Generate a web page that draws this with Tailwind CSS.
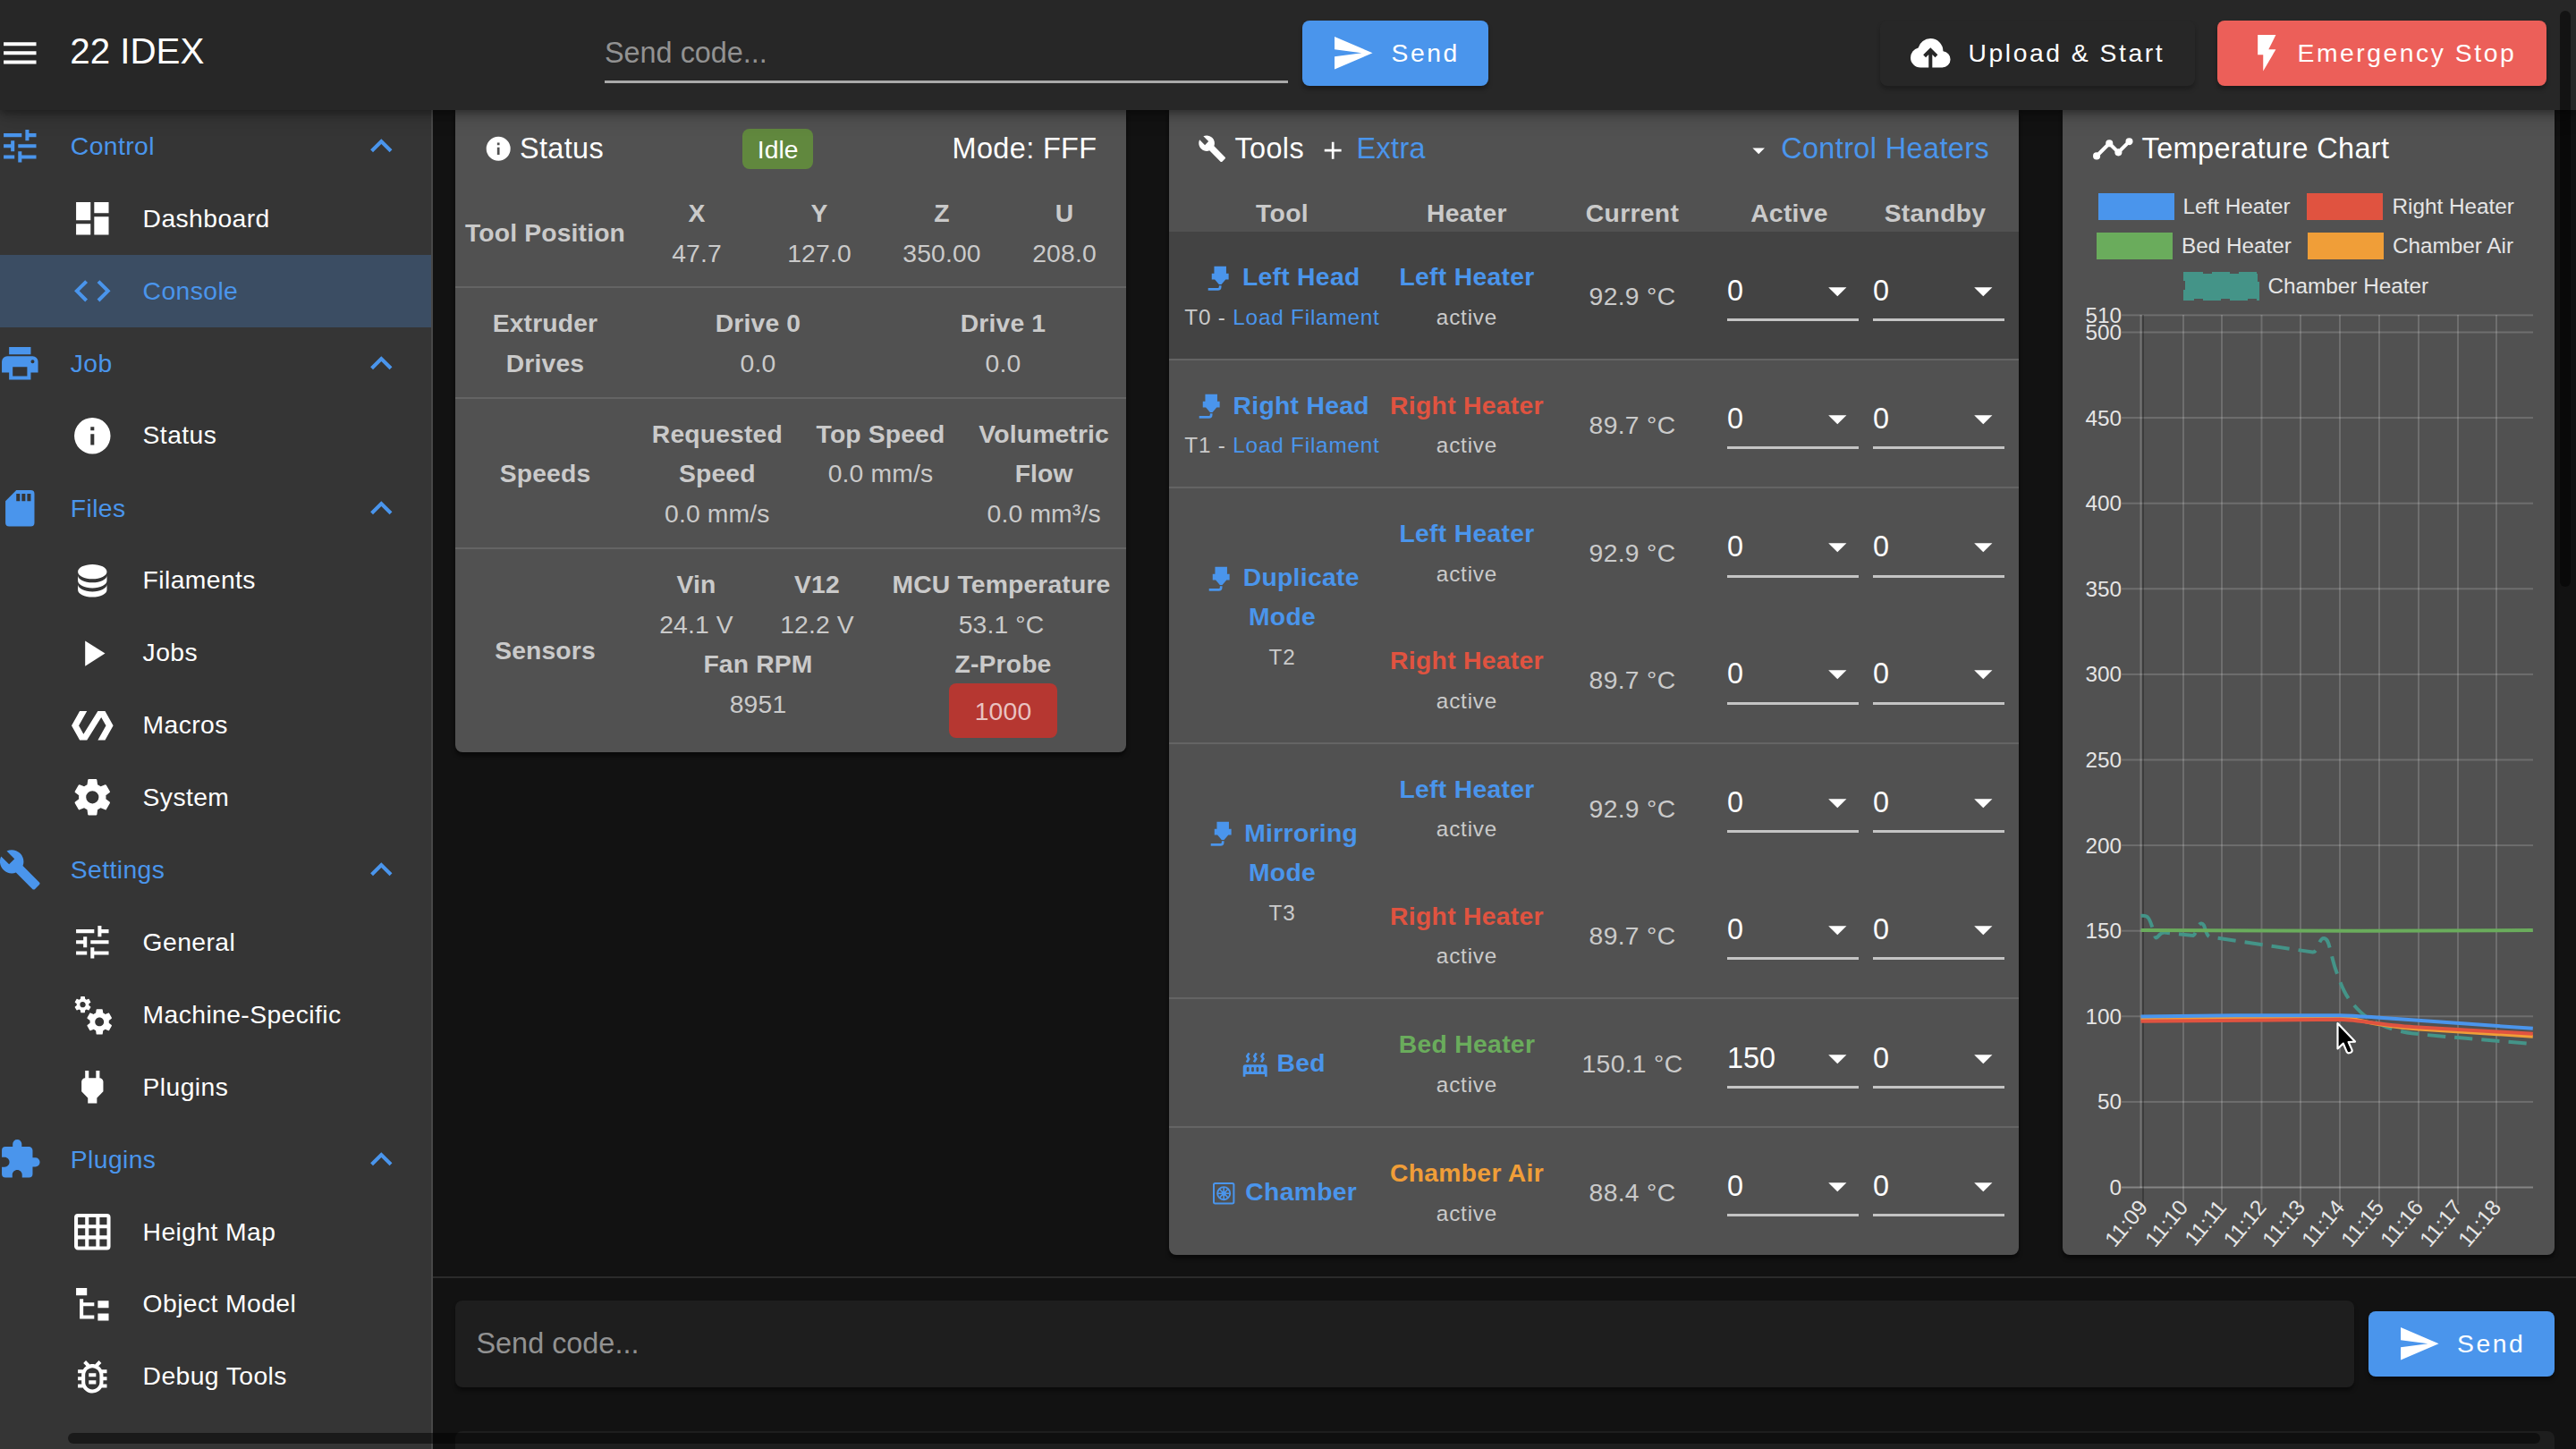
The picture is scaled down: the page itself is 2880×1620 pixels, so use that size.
<!DOCTYPE html>
<html lang="en">
<head>
<meta charset="utf-8">
<title>22 IDEX</title>
<script src="https://cdn.jsdelivr.net/npm/@tailwindcss/browser@4"></script>
</head>
<body class="w-[2880px] h-[1620px] overflow-hidden bg-[#121212] text-white font-['Liberation_Sans',Arial,sans-serif] text-[28.3px] tracking-[0.3px]">
<svg class="hidden">
  <symbol id="i-menu" viewBox="0 0 24 24"><path d="M3,6H21V8H3V6M3,11H21V13H3V11M3,16H21V18H3V16Z"/></symbol>
  <symbol id="i-tune" viewBox="0 0 24 24"><path d="M3 17V19H9V17H3M3 5V7H13V5H3M13 21V19H21V17H13V15H11V21H13M7 9V11H3V13H7V15H9V9H7M21 13V11H11V13H21M15 9H17V7H21V5H17V3H15V9Z"/></symbol>
  <symbol id="i-dash" viewBox="0 0 24 24"><path d="M13,3V9H21V3M13,21H21V11H13M3,21H11V15H3M3,13H11V3H3V13Z"/></symbol>
  <symbol id="i-code" viewBox="0 0 24 24"><path d="M14.6,16.6L19.2,12L14.6,7.4L16,6L22,12L16,18L14.6,16.6M9.4,16.6L4.8,12L9.4,7.4L8,6L2,12L8,18L9.4,16.6Z"/></symbol>
  <symbol id="i-printer" viewBox="0 0 24 24"><path d="M18,3H6V7H18M19,12A1,1 0 0,1 18,11A1,1 0 0,1 19,10A1,1 0 0,1 20,11A1,1 0 0,1 19,12M16,19H8V14H16M19,8H5A3,3 0 0,0 2,11V17H6V21H18V17H22V11A3,3 0 0,0 19,8Z"/></symbol>
  <symbol id="i-info" viewBox="0 0 24 24"><path d="M13,9H11V7H13M13,17H11V11H13M12,2A10,10 0 0,0 2,12A10,10 0 0,0 12,22A10,10 0 0,0 22,12A10,10 0 0,0 12,2Z"/></symbol>
  <symbol id="i-sd" viewBox="0 0 24 24"><path d="M18,8H16V4H18M15,8H13V4H15M12,8H10V4H12M18,2H10L4,8V20A2,2 0 0,0 6,22H18A2,2 0 0,0 20,20V4A2,2 0 0,0 18,2Z"/></symbol>
  <symbol id="i-db" viewBox="0 0 24 24"><path d="M12,3C7.58,3 4,4.79 4,7C4,9.21 7.58,11 12,11C16.42,11 20,9.21 20,7C20,4.79 16.42,3 12,3M4,9V12C4,14.21 7.58,16 12,16C16.42,16 20,14.21 20,12V9C20,11.21 16.42,13 12,13C7.58,13 4,11.21 4,9M4,14V17C4,19.21 7.58,21 12,21C16.42,21 20,19.21 20,17V14C20,16.21 16.42,18 12,18C7.58,18 4,16.21 4,14Z"/></symbol>
  <symbol id="i-play" viewBox="0 0 24 24"><path d="M8,5.14V19.14L19,12.14L8,5.14Z"/></symbol>
  <symbol id="i-polymer" viewBox="0 0 24 24"><path d="M19,4H15L7.1,16.63L4.5,12L9,4H5L0.5,12L5,20H9L16.89,7.37L19.5,12L15,20H19L23.5,12L19,4Z"/></symbol>
  <symbol id="i-cog" viewBox="0 0 24 24"><path d="M12,15.5A3.5,3.5 0 0,1 8.5,12A3.5,3.5 0 0,1 12,8.5A3.5,3.5 0 0,1 15.5,12A3.5,3.5 0 0,1 12,15.5M19.43,12.97C19.47,12.65 19.5,12.33 19.5,12C19.5,11.67 19.47,11.34 19.43,11L21.54,9.37C21.73,9.22 21.78,8.95 21.66,8.73L19.66,5.27C19.54,5.05 19.27,4.96 19.05,5.05L16.56,6.05C16.04,5.66 15.5,5.32 14.87,5.07L14.5,2.42C14.46,2.18 14.25,2 14,2H10C9.75,2 9.54,2.18 9.5,2.42L9.13,5.07C8.5,5.32 7.96,5.66 7.44,6.05L4.95,5.05C4.73,4.96 4.46,5.05 4.34,5.27L2.34,8.73C2.21,8.95 2.27,9.22 2.46,9.37L4.57,11C4.53,11.34 4.5,11.67 4.5,12C4.5,12.33 4.53,12.65 4.57,12.97L2.46,14.63C2.27,14.78 2.21,15.05 2.34,15.27L4.34,18.73C4.46,18.95 4.73,19.03 4.95,18.95L7.44,17.94C7.96,18.34 8.5,18.68 9.13,18.93L9.5,21.58C9.54,21.82 9.75,22 10,22H14C14.25,22 14.46,21.82 14.5,21.58L14.87,18.93C15.5,18.67 16.04,18.34 16.56,17.94L19.05,18.95C19.27,19.03 19.54,18.95 19.66,18.73L21.66,15.27C21.78,15.05 21.73,14.78 21.54,14.63L19.43,12.97Z"/></symbol>
  <symbol id="i-wrench" viewBox="0 0 24 24"><path d="M22.7,19L13.6,9.9C14.5,7.6 14,4.9 12.1,3C10.1,1 7.1,0.6 4.7,1.7L9,6L6,9L1.6,4.7C0.4,7.1 0.9,10.1 2.9,12.1C4.8,14 7.5,14.5 9.8,13.6L18.9,22.7C19.3,23.1 19.9,23.1 20.3,22.7L22.6,20.4C23.1,20 23.1,19.3 22.7,19Z"/></symbol>
  <symbol id="i-cogs" viewBox="0 0 24 24"><path d="M15.9,18.45C17.25,18.45 18.35,17.35 18.35,16C18.35,14.65 17.25,13.55 15.9,13.55C14.54,13.55 13.45,14.65 13.45,16C13.45,17.35 14.54,18.45 15.9,18.45M21.1,16.68L22.58,17.84C22.71,17.95 22.75,18.13 22.66,18.29L21.26,20.71C21.17,20.86 21,20.92 20.83,20.86L19.09,20.16C18.73,20.44 18.33,20.67 17.91,20.85L17.64,22.7C17.62,22.87 17.47,23 17.3,23H14.5C14.32,23 14.18,22.87 14.15,22.7L13.89,20.85C13.46,20.67 13.07,20.44 12.71,20.16L10.96,20.86C10.81,20.92 10.62,20.86 10.54,20.71L9.14,18.29C9.05,18.13 9.09,17.95 9.22,17.84L10.7,16.68L10.65,16L10.7,15.31L9.22,14.16C9.09,14.05 9.05,13.86 9.14,13.71L10.54,11.29C10.62,11.13 10.81,11.07 10.96,11.13L12.71,11.84C13.07,11.56 13.46,11.32 13.89,11.15L14.15,9.29C14.18,9.13 14.32,9 14.5,9H17.3C17.47,9 17.62,9.13 17.64,9.29L17.91,11.15C18.33,11.32 18.73,11.56 19.09,11.84L20.83,11.13C21,11.07 21.17,11.13 21.26,11.29L22.66,13.71C22.75,13.86 22.71,14.05 22.58,14.16L21.1,15.31L21.15,16L21.1,16.68M6.69,8.07C7.56,8.07 8.26,7.37 8.26,6.5C8.26,5.63 7.56,4.92 6.69,4.92A1.58,1.58 0 0,0 5.11,6.5C5.11,7.37 5.82,8.07 6.69,8.07M10.03,6.94L11,7.68C11.07,7.75 11.09,7.87 11.03,7.97L10.13,9.53C10.08,9.63 9.96,9.67 9.86,9.63L8.74,9.18L8,9.62L7.81,10.81C7.79,10.92 7.7,11 7.59,11H5.79C5.67,11 5.58,10.92 5.56,10.81L5.4,9.62L4.64,9.18L3.52,9.63C3.41,9.67 3.3,9.63 3.24,9.53L2.34,7.97C2.28,7.87 2.31,7.75 2.39,7.68L3.34,6.94L3.31,6.5L3.34,6.06L2.39,5.32C2.31,5.25 2.28,5.13 2.34,5.03L3.24,3.47C3.3,3.37 3.41,3.33 3.52,3.37L4.63,3.82L5.4,3.38L5.56,2.19C5.58,2.08 5.67,2 5.79,2H7.59C7.7,2 7.79,2.08 7.81,2.19L8,3.38L8.74,3.82L9.86,3.37C9.96,3.33 10.08,3.37 10.13,3.47L11.03,5.03C11.09,5.13 11.07,5.25 11,5.32L10.03,6.06L10.06,6.5L10.03,6.94Z"/></symbol>
  <symbol id="i-plug" viewBox="0 0 24 24"><path d="M16,7V3H14V7H10V3H8V7H8C7,7 6,8 6,9V14.5L9.5,18V21H14.5V18L18,14.5V9C18,8 17,7 16,7Z"/></symbol>
  <symbol id="i-puzzle" viewBox="0 0 24 24"><path d="M20.5,11H19V7C19,5.89 18.1,5 17,5H13V3.5A2.5,2.5 0 0,0 10.5,1A2.5,2.5 0 0,0 8,3.5V5H4A2,2 0 0,0 2,7V10.8H3.5C5,10.8 6.2,12 6.2,13.5C6.2,15 5,16.2 3.5,16.2H2V20A2,2 0 0,0 4,22H7.8V20.5C7.8,19 9,17.8 10.5,17.8C12,17.8 13.2,19 13.2,20.5V22H17A2,2 0 0,0 19,20V16H20.5A2.5,2.5 0 0,0 23,13.5A2.5,2.5 0 0,0 20.5,11Z"/></symbol>
  <symbol id="i-grid" viewBox="0 0 24 24"><path d="M10,4V8H14V4H10M16,4V8H20V4H16M16,10V14H20V10H16M16,16V20H20V16H16M14,20V16H10V20H14M8,20V16H4V20H8M8,14V10H4V14H8M8,8V4H4V8H8M10,14H14V10H10V14M4,2H20A2,2 0 0,1 22,4V20A2,2 0 0,1 20,22H4C2.92,22 2,21.1 2,20V4A2,2 0 0,1 4,2Z"/></symbol>
  <symbol id="i-tree" viewBox="0 0 24 24"><path d="M3,3H9V7H3V3M15,10H21V14H15V10M15,17H21V21H15V17M13,13H7V18H13V20H7L5,20V9H7V11H13V13Z"/></symbol>
  <symbol id="i-bug" viewBox="0 0 24 24"><path d="M20 8H17.19C16.74 7.2 16.12 6.5 15.37 6L17 4.41L15.59 3L13.42 5.17C12.96 5.06 12.5 5 12 5S11.05 5.06 10.59 5.17L8.41 3L7 4.41L8.62 6C7.87 6.5 7.26 7.21 6.81 8H4V10H6.09C6.03 10.33 6 10.66 6 11V12H4V14H6V15C6 15.34 6.03 15.67 6.09 16H4V18H6.81C8.47 20.87 12.14 21.84 15 20.18C15.91 19.66 16.67 18.9 17.19 18H20V16H17.91C17.97 15.67 18 15.34 18 15V14H20V12H18V11C18 10.66 17.97 10.33 17.91 10H20V8M16 15C16 17.21 14.21 19 12 19S8 17.21 8 15V11C8 8.79 9.79 7 12 7S16 8.79 16 11V15M14 10V12H10V10H14M10 14H14V16H10V14Z"/></symbol>
  <symbol id="i-up" viewBox="0 0 24 24"><path d="M7.41,15.41L12,10.83L16.59,15.41L18,14L12,8L6,14L7.41,15.41Z"/></symbol>
  <symbol id="i-down" viewBox="0 0 24 24"><path d="M7,10L12,15L17,10H7Z"/></symbol>
  <symbol id="i-plus" viewBox="0 0 24 24"><path d="M19,13H13V19H11V13H5V11H11V5H13V11H19V13Z"/></symbol>
  <symbol id="i-send" viewBox="0 0 24 24"><path d="M2,21L23,12L2,3V10L17,12L2,14V21Z"/></symbol>
  <symbol id="i-cloud" viewBox="0 0 24 24"><path d="M11 20H6.5Q4.22 20 2.61 18.43 1 16.85 1 14.58 1 12.63 2.17 11.1 3.35 9.57 5.25 9.15 5.88 6.85 7.75 5.43 9.63 4 12 4 14.93 4 16.96 6.04 19 8.07 19 11 20.73 11.2 21.86 12.5 23 13.78 23 15.5 23 17.38 21.69 18.69 20.38 20 18.5 20H13V12.85L14.6 14.4L16 13L12 9L8 13L9.4 14.4L11 12.85Z"/></symbol>
  <symbol id="i-flash" viewBox="0 0 24 24"><path d="M7,2V13H10V22L17,10H13L17,2H7Z"/></symbol>
  <symbol id="i-nozzle" viewBox="0 0 24 24"><path d="M7,2H17V8H19V13H16.5L13,17H11L7.5,13H5V8H7V2M10,22H2V20H10A1,1 0 0,0 11,19V18H13V19A3,3 0 0,1 10,22Z"/></symbol>
  <symbol id="i-bed" viewBox="0 0 24 24"><path d="M7.95,3L6.53,5.19L7.95,7.4H7.94L5.95,10.5L4.22,9.6L5.64,7.39L4.22,5.19L6.22,2.09L7.95,3M13.95,2.89L12.53,5.1L13.95,7.3L13.94,7.31L11.95,10.4L10.22,9.5L11.64,7.3L10.22,5.1L12.22,2L13.95,2.89M20,2.89L18.56,5.1L20,7.3V7.31L18,10.4L16.25,9.5L17.67,7.3L16.25,5.1L18.25,2L20,2.89M2,22V14A2,2 0 0,1 4,12H20A2,2 0 0,1 22,14V22H20V20H4V22H2M6,14A1,1 0 0,0 5,15V17A1,1 0 0,0 6,18A1,1 0 0,0 7,17V15A1,1 0 0,0 6,14M10,14A1,1 0 0,0 9,15V17A1,1 0 0,0 10,18A1,1 0 0,0 11,17V15A1,1 0 0,0 10,14M14,14A1,1 0 0,0 13,15V17A1,1 0 0,0 14,18A1,1 0 0,0 15,17V15A1,1 0 0,0 14,14M18,14A1,1 0 0,0 17,15V17A1,1 0 0,0 18,18A1,1 0 0,0 19,17V15A1,1 0 0,0 18,14Z"/></symbol>
  <symbol id="i-chamber" viewBox="0 0 24 24"><g fill="none" stroke="currentColor"><rect x="3.7" y="3.7" width="16.6" height="16.6" rx="1.2" stroke-width="1.5"/><circle cx="12" cy="12" r="5.2" stroke-width="1.4"/><path d="M12 7v10M7 12h10M8.5 8.5l7 7M15.5 8.5l-7 7" stroke-width="1.2"/></g><circle cx="12" cy="12" r="1.9"/></symbol>
  <symbol id="i-chart" viewBox="0 0 24 24"><path d="M23,8C23,9.11 22.11,10 21,10C20.82,10 20.64,9.97 20.5,9.93L16.93,13.5C16.97,13.65 17,13.82 17,14A2,2 0 0,1 15,16A2,2 0 0,1 13,14C13,13.82 13.03,13.64 13.07,13.5L10.5,10.93C10.36,10.97 10.18,11 10,11C9.82,11 9.64,10.97 9.5,10.93L4.93,15.5C4.97,15.64 5,15.82 5,16A2,2 0 0,1 3,18A2,2 0 0,1 1,16A2,2 0 0,1 3,14C3.18,14 3.36,14.03 3.5,14.07L8.07,9.5C8.03,9.36 8,9.18 8,9A2,2 0 0,1 10,7A2,2 0 0,1 12,9C12,9.18 11.97,9.36 11.93,9.5L14.5,12.07C14.64,12.03 14.82,12 15,12C15.18,12 15.36,12.03 15.5,12.07L19.07,8.5C19.03,8.36 19,8.18 19,8A2,2 0 0,1 21,6A2,2 0 0,1 23,8Z"/></symbol>
</svg>

<div class="flex flex-col w-[2880px] h-[1620px]">
  <!-- App bar -->
  <header class="relative z-10 flex items-center h-[123px] pb-[5px] shrink-0 bg-[#272727] shadow-[0_4px_8px_rgba(0,0,0,.3),0_8px_20px_rgba(0,0,0,.18)]">
    <svg class="size-[48.6px] -ml-[2.3px] shrink-0 fill-current"><use href="#i-menu"/></svg>
    <h1 class="w-[629.7px] shrink-0 pl-[32px] pb-[2px] text-[40.3px] leading-[50px] tracking-normal">22 IDEX</h1>
    <div class="flex items-center w-[764px] shrink-0 h-[64px] border-b-[3px] border-[#a9a9a9] text-[32.4px] tracking-normal text-[#929292] self-end mb-[25px]">Send code...</div>
    <button class="flex items-center w-[208px] h-[73px] ml-4 pl-[32px] rounded-lg bg-[#4a95ec] tracking-[2.53px] shadow-[0_4px_5px_rgba(0,0,0,.3)]">
      <svg class="size-[48.6px] fill-current"><use href="#i-send"/></svg><span class="ml-[19px]">Send</span></button>
    <button class="flex items-center w-[352px] h-[73px] ml-[438px] pl-[32px] rounded-lg bg-[#272727] tracking-[2.53px] whitespace-nowrap shadow-[0_4px_5px_rgba(0,0,0,.25)]">
      <svg class="size-[48.6px] shrink-0 fill-current"><use href="#i-cloud"/></svg><span class="ml-[18px]">Upload &amp; Start</span></button>
    <button class="flex items-center w-[368px] h-[73px] ml-[25px] pl-[31px] rounded-lg bg-[#ec5f59] tracking-[2.53px] whitespace-nowrap shadow-[0_4px_5px_rgba(0,0,0,.3)]">
      <svg class="size-[48.6px] shrink-0 fill-current"><use href="#i-flash"/></svg><span class="ml-[10px]">Emergency Stop</span></button>
  </header>

  <div class="flex flex-1 min-h-0">
    <nav id="nav" class="w-[484px] shrink-0 bg-[#353535] border-r-2 border-[#484848] tracking-[0.4px]"></nav>

    <main class="flex-1 flex flex-col min-w-0">
      <div class="flex items-start h-[1280px] pl-[24.5px] gap-[48.5px] shrink-0">

        <!-- Status card -->
        <section class="w-[750px] h-[717.5px] rounded-b-lg bg-[#515151] text-[#cacaca] leading-[44.6px] tracking-[0.15px] text-center shadow-[0_4px_4px_rgba(0,0,0,.5)]">
          <div class="grid grid-cols-3 items-center h-[78px] pt-[9px] pl-[32px] pr-[32px] text-white text-[32.4px] tracking-[0.4px]">
            <div class="flex items-center"><svg class="size-[32.4px] fill-current"><use href="#i-info"/></svg><span class="ml-[8px]">Status</span></div>
            <div class="flex"><span class="w-[79px] h-[45px] ml-[61px] rounded-lg bg-[#61883e] text-[28.3px] leading-[47px] tracking-normal">Idle</span></div>
            <div class="text-right whitespace-nowrap">Mode: FFF</div>
          </div>
          <div class="grid grid-cols-[202px_548px] items-center h-[121px] border-b-2 border-[#646464]">
            <b class="whitespace-nowrap">Tool Position</b>
            <div class="grid grid-cols-4">
              <div><b>X</b><div>47.7</div></div><div><b>Y</b><div>127.0</div></div><div><b>Z</b><div>350.00</div></div><div><b>U</b><div>208.0</div></div>
            </div>
          </div>
          <div class="grid grid-cols-[202px_548px] items-center h-[124px] pt-[2px] border-b-2 border-[#646464]">
            <b class="px-[30px]">Extruder Drives</b>
            <div class="grid grid-cols-2"><div><b>Drive 0</b><div>0.0</div></div><div><b>Drive 1</b><div>0.0</div></div></div>
          </div>
          <div class="grid grid-cols-[202px_548px] items-center h-[168px] pt-[1px] border-b-2 border-[#646464]">
            <b>Speeds</b>
            <div class="grid grid-cols-3">
              <div><b>Requested<br>Speed</b><div>0.0 mm/s</div></div><div><b class="whitespace-nowrap">Top Speed</b><div>0.0 mm/s</div></div><div><b>Volumetric<br>Flow</b><div>0.0 mm³/s</div></div>
            </div>
          </div>
          <div class="grid grid-cols-[202px_548px] items-center h-[226px] pt-[1px]">
            <b>Sensors</b>
            <div class="mt-[1px]">
              <div class="grid grid-cols-[136px_134px_278px]">
                <div><b>Vin</b><div>24.1 V</div></div><div><b>V12</b><div>12.2 V</div></div><div><b class="whitespace-nowrap">MCU Temperature</b><div>53.1 °C</div></div>
              </div>
              <div class="grid grid-cols-2">
                <div><b>Fan RPM</b><div>8951</div></div>
                <div><b>Z-Probe</b><div class="w-[121.5px] h-[61px] -mt-px mx-auto rounded-lg bg-[#b63731] text-[#e9c3c1] leading-[62px]">1000</div></div>
              </div>
            </div>
          </div>
        </section>

        <!-- Tools card -->
        <section class="w-[950px] h-[1280px] rounded-b-lg bg-[#515151] text-[#cacaca] leading-[44.6px] text-center shadow-[0_4px_4px_rgba(0,0,0,.5)]">
          <div class="flex items-center h-[78px] pt-[9px] pl-[32px] pr-[33px] text-white text-[32.4px] tracking-[0.4px]">
            <svg class="size-[32.4px] fill-current"><use href="#i-wrench"/></svg><span class="ml-[9px]">Tools</span>
            <svg class="size-[32.4px] ml-[16px] mt-[4px] fill-current"><use href="#i-plus"/></svg><span class="ml-[10px] text-[#4a95ec]">Extra</span>
            <svg class="size-[32.4px] ml-auto mt-[3px] fill-current"><use href="#i-down"/></svg><span class="ml-[9px] text-[#4a95ec]">Control Heaters</span>
          </div>
          <div class="grid grid-cols-[221px_192px_178px_163px_163px] pl-4 h-[58.3px] pt-[14.7px] font-bold">
            <div>Tool</div><div>Heater</div><div>Current</div><div class="pr-0.5 pl-4 -ml-1">Active</div><div class="pr-0.5 pl-4 -ml-1">Standby</div>
          </div>
          <div id="tools"></div>
        </section>

        <!-- Temperature chart card -->
        <section class="w-[550px] h-[1280px] rounded-b-lg bg-[#515151] shadow-[0_4px_4px_rgba(0,0,0,.5)]">
          <div class="flex items-center h-[78px] pt-[9px] pl-[32.5px] text-[32.4px] tracking-[0.4px]">
            <svg class="size-[48.6px] fill-current"><use href="#i-chart"/></svg><span class="ml-[8px]">Temperature Chart</span>
          </div>
          <div class="flex flex-col h-[134px] pt-[7.5px] text-[24.3px] leading-[44.6px] tracking-normal text-[#e5e5e5]">
            <div class="flex items-center h-[44.7px] pl-[40px]"><i class="w-[85px] h-[30px] bg-[#4a95ec]"></i><span class="w-[148px] pl-[10px]">Left Heater</span><i class="w-[85px] h-[30px] bg-[#e05340]"></i><span class="pl-[11px] pt-px">Right Heater</span></div>
            <div class="flex items-center h-[44.7px] pl-[38.5px]"><i class="w-[85px] h-[30px] bg-[#6aac5c]"></i><span class="w-[151px] pl-[10px]">Bed Heater</span><i class="w-[85px] h-[30px] bg-[#f09e38]"></i><span class="pl-[10px]">Chamber Air</span></div>
            <div class="flex items-center h-[44.7px] pl-[135px]"><svg class="w-[85px] h-[32px]" viewBox="0 0 85 32"><rect x="2" y="2" width="81" height="28" fill="#449488" stroke="#449488" stroke-width="4" stroke-dasharray="20 10"/></svg><span class="pl-[10px]">Chamber Heater</span></div>
          </div>
          <svg id="chart" class="block w-[550px] h-[1068px] text-[24.3px] fill-[#e5e5e5] tracking-normal" viewBox="2306 335 550 1068"></svg>
        </section>
      </div>

      <!-- Code input -->
      <div class="mt-[24px] h-[193px] shrink-0 border-t-2 border-[#2b2b2b] flex items-start gap-4 pl-[24.5px] pt-[25px]">
        <div class="flex items-center w-[2123px] h-[97px] pl-[24px] rounded-lg bg-[#1e1e1e] text-[32.4px] tracking-normal text-[#929292] shadow-[0_4px_4px_rgba(0,0,0,.4)]">Send code...</div>
        <button class="flex items-center w-[208px] h-[73px] mt-[12px] pl-[32px] rounded-lg bg-[#4a95ec] tracking-[2.53px] shadow-[0_4px_4px_rgba(0,0,0,.4)]">
          <svg class="size-[48.6px] fill-current"><use href="#i-send"/></svg><span class="ml-[19px]">Send</span></button>
      </div>
    </main>
  </div>
</div>

<!-- Next card's top edge and the overlay scrollbars -->
<div class="absolute left-[508.5px] top-[1600px] w-[2347.5px] h-[20px] rounded-t-lg bg-[#1e1e1e]"></div>
<div class="absolute z-20 left-[76px] top-[1602px] w-[2764px] h-[12px] rounded-full bg-black/50"></div>
<div class="absolute z-20 left-[2862px] top-[12px] w-[12px] h-[644px] rounded-full bg-black/50"></div>

<!-- Mouse pointer -->
<svg class="absolute z-20 left-[2608px] top-[1138px] w-[34px] h-[46px]" viewBox="0 0 34 46"><path d="M5.5 6V34.5L11.8 28.6L15.8 38.2Q17 40 19.2 39L20.6 38.4Q22.2 37.4 21.4 35.4L17.6 27L25 26.6Z" fill="#000" stroke="#fff" stroke-width="2.2" stroke-linejoin="round"/></svg>

<script>
const icon = (name, cls) => `<svg class="${cls} fill-current shrink-0"><use href="#i-${name}"/></svg>`;

const groups = [
  ['tune', 'Control', [['dash', 'Dashboard'], ['code', 'Console', true]]],
  ['printer', 'Job', [['info', 'Status']]],
  ['sd', 'Files', [['db', 'Filaments'], ['play', 'Jobs'], ['polymer', 'Macros'], ['cog', 'System']]],
  ['wrench', 'Settings', [['tune', 'General'], ['cogs', 'Machine-Specific'], ['plug', 'Plugins']]],
  ['puzzle', 'Plugins', [['grid', 'Height Map'], ['tree', 'Object Model'], ['bug', 'Debug Tools']]],
];
document.getElementById('nav').innerHTML = groups.map(([ic, label, items]) => `
  <div class="flex items-center h-[80.93px] text-[#4a95ec]">${icon(ic, 'size-[48.6px] -ml-[2.3px]')}<span class="ml-[32.5px] flex-1">${label}</span>${icon('up', 'size-[48.6px] mr-[31px]')}</div>
  ${items.map(([i, l, on]) => `<div class="flex items-center h-[80.93px] pl-[79px] ${on ? 'bg-[#3b4d63] text-[#4a95ec]' : ''}">${icon(i, 'size-[48.6px]')}<span class="ml-[32px] pb-px">${l}</span></div>`).join('')}`).join('');

const blue = 'text-[#4a95ec]', red = 'text-[#e05340]', green = 'text-[#6aac5c]', orange = 'text-[#f09e38]';
const tools = [
  ['nozzle', 'Left Head', 'T0', true, [['Left Heater', blue, '92.9', 0]], 'h-[143.4px]'],
  ['nozzle', 'Right Head', 'T1', true, [['Right Heater', red, '89.7', 0]], 'h-[143.4px]'],
  ['nozzle', 'Duplicate<br>Mode', 'T2', false, [['Left Heater', blue, '92.9', 0], ['Right Heater', red, '89.7', 0]], 'h-[285.7px]'],
  ['nozzle', 'Mirroring<br>Mode', 'T3', false, [['Left Heater', blue, '92.9', 0], ['Right Heater', red, '89.7', 0]], 'h-[285.7px]'],
  ['bed', 'Bed', '', false, [['Bed Heater', green, '150.1', 150]], 'h-[143.5px]'],
  ['chamber', 'Chamber', '', false, [['Chamber Air', orange, '88.4', 0]], 'h-[142px]'],
];
const field = v => `<div class="flex items-center justify-between w-[147px] h-[65px] mt-[34.5px] ml-[17px] border-b-[3px] border-[#c4c4c4] text-white text-[32.4px] tracking-normal"><span>${v}</span>${icon('down', 'size-[48.6px] -mr-[1px]')}</div>`;
document.getElementById('tools').innerHTML = tools.map(([ic, name, no, load, heaters, h], n) => `
  <div class="flex pl-4 ${h} ${n == 0 ? 'bg-[#434343]' : ''} ${n < 5 ? 'border-b-2 border-[#646464]' : ''}">
    <div class="w-[221px] flex flex-col justify-center whitespace-nowrap ${no ? 'pt-[5px]' : 'pt-[1px]'}">
      <div class="font-bold ${blue}"><svg class="inline-block size-[32.4px] fill-current -mt-[1px] mr-[8px] ml-[2px] align-middle"><use href="#i-${ic}"/></svg>${name}</div>
      ${no ? `<div class="text-[24.3px] leading-[46px] tracking-[0.8px]">${no}${load ? ` - <span class="${blue}">Load Filament</span>` : ''}</div>` : ''}
    </div>
    <div>${heaters.map(([hn, c, t, v]) => `
      <div class="flex h-[142px]">
        <div class="w-[192px] pt-[28px] whitespace-nowrap"><div class="font-bold ${c}">${hn}</div><div class="text-[24.3px] leading-[46px] tracking-[0.8px]">active</div></div>
        <div class="w-[178px] pt-[50px]">${t} °C</div>
        ${field(v)}<div class="-ml-[1px]">${field(0)}</div>
      </div>`).join('')}
    </div>
  </div>`).join('');

// Temperature chart
const xs = [2396, 2441, 2484, 2528.5, 2572, 2616, 2660, 2704, 2748, 2791];
const y = t => 1327.5 - t * 1.912;
let s = '';
[510, 500, 450, 400, 350, 300, 250, 200, 150, 100, 50, 0].forEach(t => {
  s += `<rect x="2372" y="${y(t) - 1}" width="460" height="2" fill="#fff" fill-opacity="${t ? .17 : .3}"/><text x="2372" y="${y(t) + 8.5}" text-anchor="end">${t}</text>`;
});
s += `<rect x="2392.5" y="352" width="2" height="976" fill="#fff" fill-opacity=".2"/>`;
xs.forEach((x, i) => {
  s += `<rect x="${x - 1}" y="352" width="2" height="995" fill="${i ? '#fff' : '#000'}" fill-opacity="${i ? .17 : .25}"/><text transform="translate(${x} 1345) rotate(-50)" y="8.5" text-anchor="end">11:${String(9 + i).padStart(2, '0')}</text>`;
});
const line = (c, d, dash) => `<path d="${d}" fill="none" stroke="${c}" stroke-width="4" ${dash ? 'stroke-dasharray="20.2 10.1"' : ''}/>`;
s += line('#449488', 'M2393.5 1024C2402 1023 2403 1027 2406 1035.8S2409 1049 2411 1048.4S2415 1042 2420 1042.5L2452 1046C2456 1044 2456 1033 2461 1032.5S2465 1046 2471 1047.5L2585.5 1064.5C2592 1065 2592 1049 2598 1049S2604 1060 2610.6 1082C2616 1097 2620 1110 2629 1120.5C2637 1130 2644 1138 2660.6 1145C2672 1151 2690 1154.5 2696.4 1155.2C2720 1158 2740 1159.5 2756.6 1160.8L2832 1167', true);
s += line('#f09e38', 'M2393.5 1139L2616 1137.6C2632 1138 2640 1142.5 2660.6 1145.2C2676 1147.5 2690 1149.5 2704 1150.5L2831.8 1158.7');
s += line('#6aac5c', 'M2393.5 1040L2640 1040.7L2831.8 1040');
s += line('#e05340', 'M2393.5 1141.8L2616 1139.7C2640 1140.5 2670 1147 2704 1148.4L2831.8 1155.7');
s += line('#4a95ec', 'M2393.5 1136.4L2500 1135.2H2616C2632 1135.5 2645 1136.7 2660.6 1137.8L2831.8 1149.8');
document.getElementById('chart').innerHTML = s;
</script>
</body>
</html>
